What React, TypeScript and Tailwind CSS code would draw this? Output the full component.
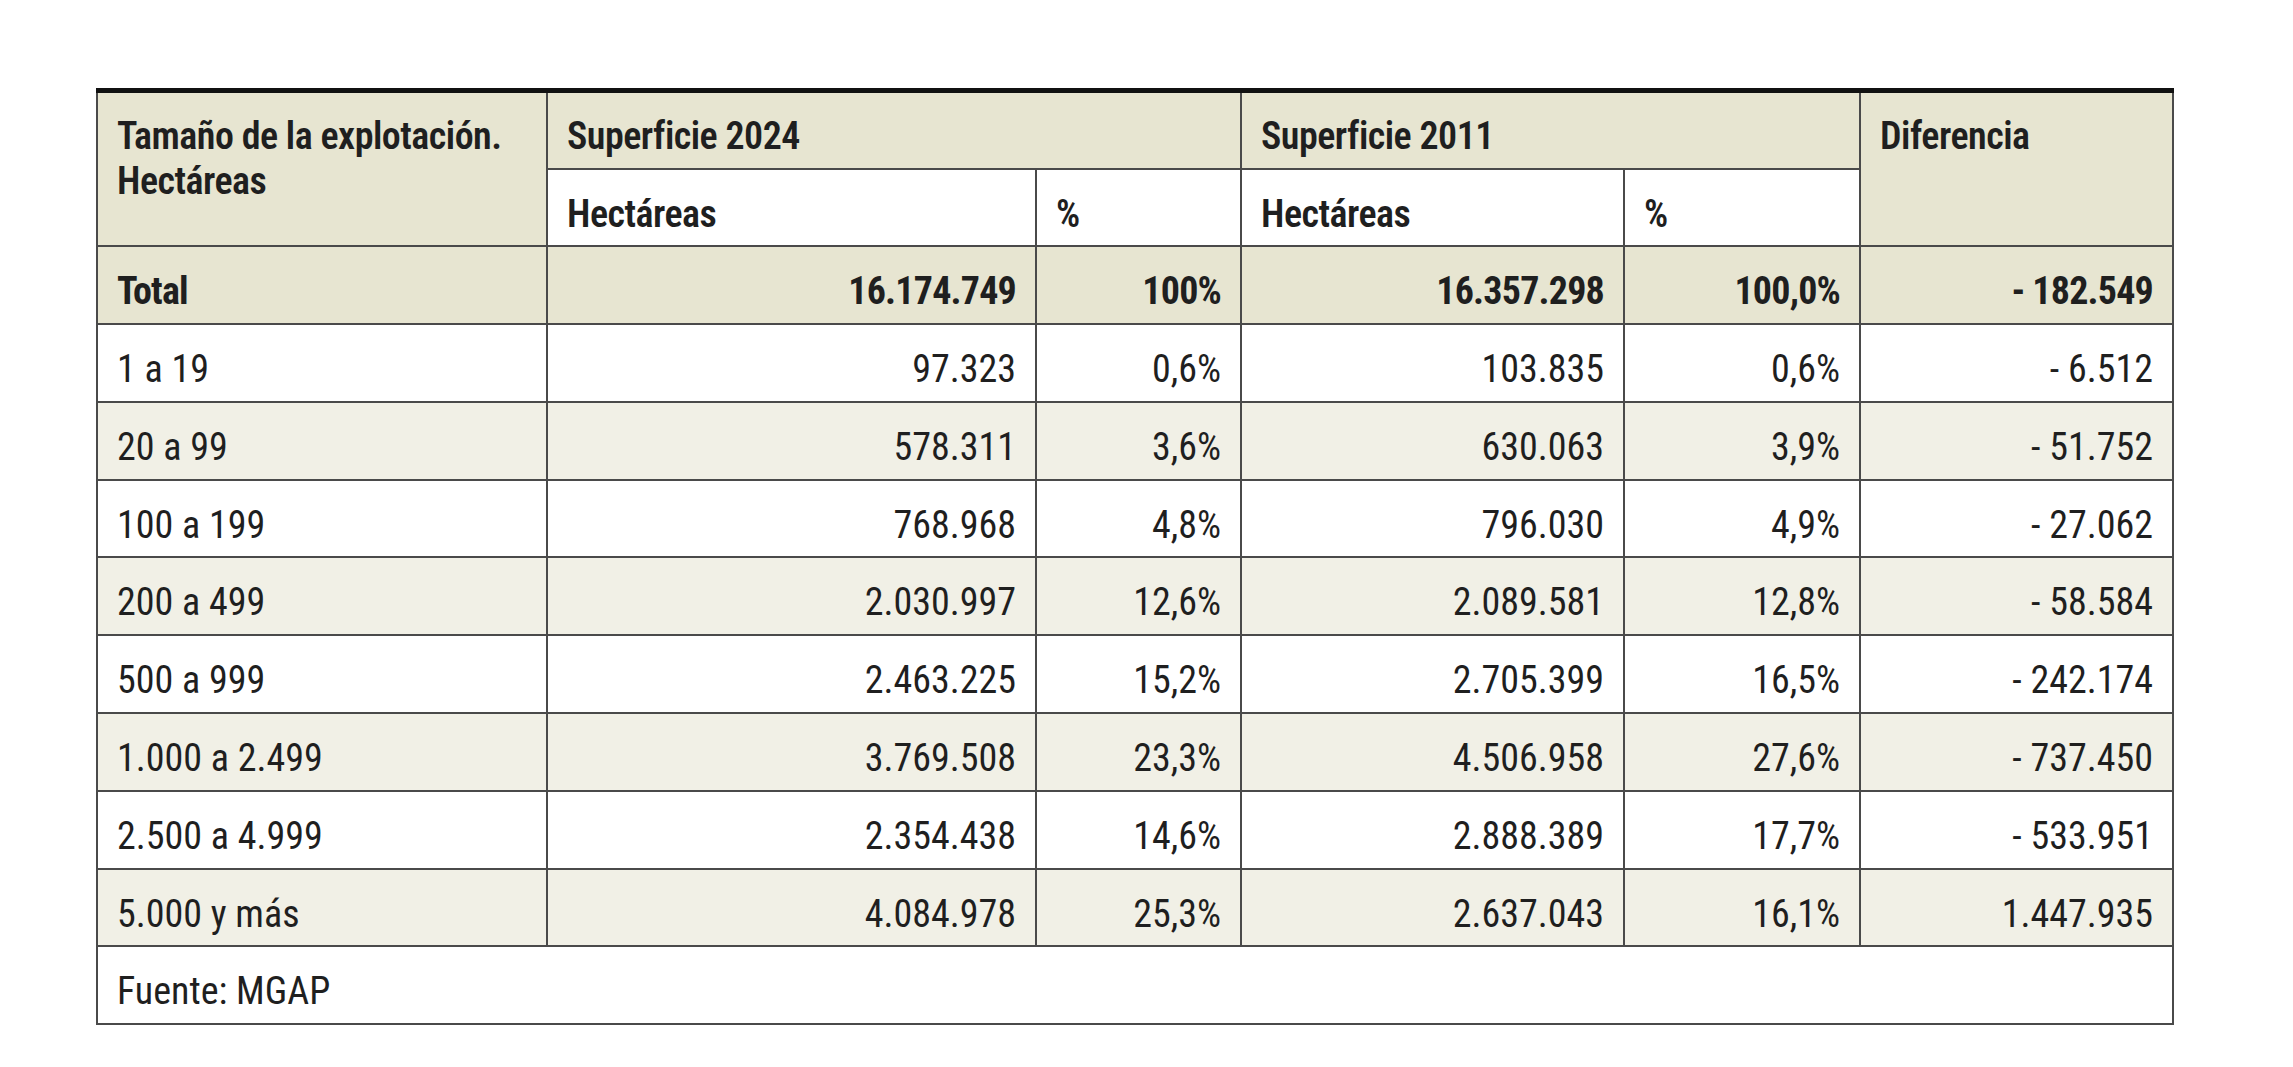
import React from 'react';

const rows = [
  ['1 a 19', '97.323', '0,6%', '103.835', '0,6%', '- 6.512'],
  ['20 a 99', '578.311', '3,6%', '630.063', '3,9%', '- 51.752'],
  ['100 a 199', '768.968', '4,8%', '796.030', '4,9%', '- 27.062'],
  ['200 a 499', '2.030.997', '12,6%', '2.089.581', '12,8%', '- 58.584'],
  ['500 a 999', '2.463.225', '15,2%', '2.705.399', '16,5%', '- 242.174'],
  ['1.000 a 2.499', '3.769.508', '23,3%', '4.506.958', '27,6%', '- 737.450'],
  ['2.500 a 4.999', '2.354.438', '14,6%', '2.888.389', '17,7%', '- 533.951'],
  ['5.000 y más', '4.084.978', '25,3%', '2.637.043', '16,1%', '1.447.935'],
];

const cell = 'border-2 border-[#4a4a4a] px-[19px] pt-[22px] pb-0 align-top h-[77.8px]';
const head = 'border-2 border-[#4a4a4a] border-t-[5px] border-t-[#111] px-[19px] pt-[21px] pb-0 align-top h-[78px] bg-[#e7e5d1] text-left';
const bold = 'font-semibold tracking-[-0.5px]';

export default function App() {
  return (
    <div className="min-h-screen bg-white pl-[96px] pt-[88px] font-['Roboto',sans-serif] font-stretch-condensed text-[38px] leading-[45px] text-[#1f1f1f]">
      <table className="w-[2076px] table-fixed border-collapse">
        <colgroup>
          <col className="w-[450px]" />
          <col className="w-[489px]" />
          <col className="w-[205px]" />
          <col className="w-[383px]" />
          <col className="w-[236px]" />
          <col className="w-[313px]" />
        </colgroup>
        <thead>
          <tr>
            <th rowSpan={2} className={`${head} ${bold}`}>
              Tamaño de la explotación.
              <br />
              Hectáreas
            </th>
            <th colSpan={2} className={`${head} ${bold}`}>
              Superficie 2024
            </th>
            <th colSpan={2} className={`${head} ${bold}`}>
              Superficie 2011
            </th>
            <th rowSpan={2} className={`${head} ${bold}`}>
              Diferencia
            </th>
          </tr>
          <tr>
            <th className={`${cell} ${bold} bg-white text-left`}>Hectáreas</th>
            <th className={`${cell} ${bold} bg-white text-left`}>%</th>
            <th className={`${cell} ${bold} bg-white text-left`}>Hectáreas</th>
            <th className={`${cell} ${bold} bg-white text-left`}>%</th>
          </tr>
        </thead>
        <tbody>
          <tr className="bg-[#e7e5d1] font-bold tracking-[-0.8px]">
            <td className={`${cell} text-left`}>Total</td>
            <td className={`${cell} text-right`}>16.174.749</td>
            <td className={`${cell} text-right`}>100%</td>
            <td className={`${cell} text-right`}>16.357.298</td>
            <td className={`${cell} text-right`}>100,0%</td>
            <td className={`${cell} text-right`}>- 182.549</td>
          </tr>
          {rows.map((r, i) => (
            <tr key={r[0]} className={i % 2 === 0 ? 'bg-white' : 'bg-[#f1f0e6]'}>
              {r.map((v, j) => (
                <td key={j} className={`${cell} ${j === 0 ? 'text-left' : 'text-right'}`}>
                  {v}
                </td>
              ))}
            </tr>
          ))}
          <tr className="bg-white">
            <td colSpan={6} className={`${cell} text-left`}>Fuente: MGAP</td>
          </tr>
        </tbody>
      </table>
    </div>
  );
}
